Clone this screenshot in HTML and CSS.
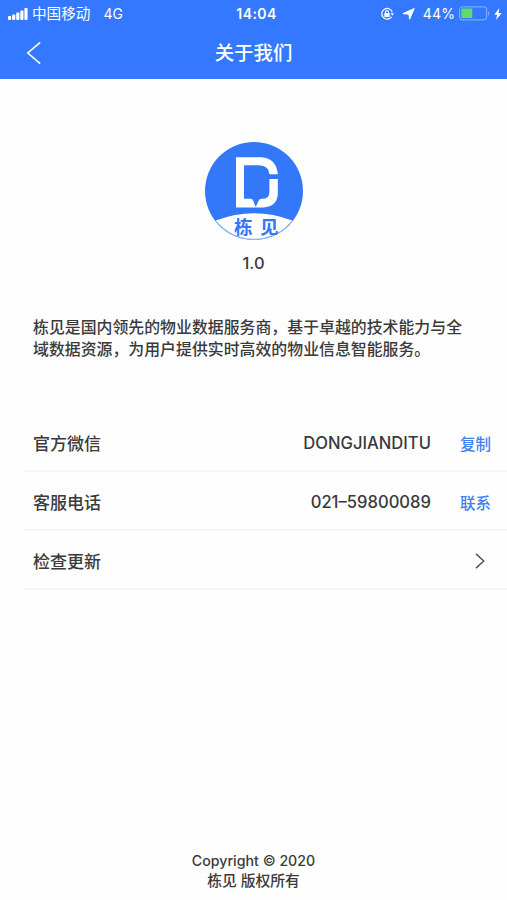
FILE: index.html
```html
<!DOCTYPE html>
<html lang="zh-CN">
<head>
    <meta charset="UTF-8">
    <meta name="viewport" content="width=device-width, initial-scale=1.0">
    <title>关于我们</title>
    <link rel="stylesheet" href="styles.css">
</head>
<body>
    <header class="header">
        <div class="status-bar">
            <div class="status-left">
                <svg class="signal" width="20" height="12" viewBox="0 0 20 12" fill="#fff">
                    <rect x="0" y="8" width="3.2" height="4" rx="1"/>
                    <rect x="4.1" y="6.5" width="3.2" height="5.5" rx="1"/>
                    <rect x="8.2" y="4.5" width="3.2" height="7.5" rx="1"/>
                    <rect x="12.3" y="2.5" width="3.2" height="9.5" rx="1"/>
                    <rect x="16.4" y="0" width="3.2" height="12" rx="1"/>
                </svg>
                <span class="carrier">中国移动</span>
                <span class="network">4G</span>
            </div>
            <span class="time">14:04</span>
            <div class="status-right">
                <svg class="lock" width="14" height="14" viewBox="0 0 14 14" fill="none" stroke="#fff">
                    <path d="M12.3 5A5.4 5.4 0 1 0 11.6 9.9" stroke-width="1.2"/>
                    <path d="M10.4 6.3H14l-1.7 2.5z" fill="#fff" stroke="none"/>
                    <rect x="4.3" y="6" width="5.4" height="4" rx=".5" fill="#fff" stroke="none"/>
                    <path d="M5.5 6.4V5.1a1.5 1.5 0 0 1 3 0v1.3" stroke-width="1.1"/>
                </svg>
                <svg class="location" width="13" height="12" viewBox="0 0 13 12" fill="#fff" stroke="#fff" stroke-width="1" stroke-linejoin="round">
                    <path d="M12.2.6L7.6 11.2 6.9 6.2.9 5.6z"/>
                </svg>
                <span class="percent">44%</span>
                <svg class="battery" width="31" height="15" viewBox="0 0 31 15">
                    <rect x=".6" y=".9" width="27" height="13" rx="2.6" fill="none" stroke="#8fb4ff" stroke-width="1"/>
                    <rect x="2.3" y="2.6" width="11" height="9.4" rx=".8" fill="#62dc68"/>
                    <path d="M29.2 5.2c1.6.7 1.6 3.8 0 4.5z" fill="#8fb4ff"/>
                </svg>
                <svg class="bolt" width="8" height="12" viewBox="0 0 8 12" fill="#fff">
                    <path d="M5.3 0L.3 6.7h2.9L2 12l5.7-7H4.6z"/>
                </svg>
            </div>
        </div>
        <div class="nav-bar">
            <svg class="back" width="16" height="24" viewBox="0 0 16 24" fill="none" stroke="#fff" stroke-width="1.6">
                <path d="M14.2 1.3L1.8 12l12.4 10.7"/>
            </svg>
            <h1>关于我们</h1>
        </div>
    </header>

    <main>
        <div class="brand">
            <svg class="logo" width="98" height="98" viewBox="0 0 98 98">
                <circle cx="49" cy="49" r="49" fill="#3478fa"/>
                <!-- white foot of the badge -->
                <path d="M10.8 78.6Q49 64 87.2 78.6A48.5 48.5 0 0 1 10.8 78.6z" fill="#fff"/>
                <path d="M10.8 78.6A48.5 48.5 0 0 0 87.2 78.6" fill="none" stroke="#a9c3ee" stroke-width="1"/>
                <!-- D mark with the map pin cut out -->
                <path d="M31 15.3h25.5Q71.5 16.5 72.8 32.3h-8.3Q64 23.5 54 23.2H39v33.6h6.6q2.1 0 2.7 2.3l2.4 6 2.8-6q.9-2.3 3-2.3h1.7q6.2 0 6.2-7V37h8.4v15.2q-1 12.3-14.3 13.3H31z" fill="#fff"/>
                <text class="logo-text" x="29" y="91.5">栋</text>
                <text class="logo-text" x="55" y="91.5">见</text>
            </svg>
            <p class="version">1.0</p>
        </div>

        <p class="intro">栋见是国内领先的物业数据服务商，基于卓越的技术能力与全域数据资源，为用户提供实时高效的物业信息智能服务。</p>

        <ul class="list">
            <li class="row">
                <span class="label">官方微信</span>
                <span class="value">DONGJIANDITU</span>
                <a class="action">复制</a>
            </li>
            <li class="row">
                <span class="label">客服电话</span>
                <span class="value">021–59800089</span>
                <a class="action">联系</a>
            </li>
            <li class="row">
                <span class="label">检查更新</span>
                <svg class="arrow" width="10" height="16" viewBox="0 0 10 16" fill="none" stroke="#555" stroke-width="1.5">
                    <path d="M1 .9L8.7 8 1 15.1"/>
                </svg>
            </li>
        </ul>
    </main>

    <footer class="footer">
        <p class="copyright">Copyright © 2020</p>
        <p class="owner">栋见 版权所有</p>
    </footer>
</body>
</html>
```
FILE: styles.css
```css
* {
    box-sizing: border-box;
    margin: 0;
    padding: 0;
}

body {
    display: flex;
    flex-direction: column;
    height: 900px;
    background: #fefefe;
    color: #3a3a3a;
    font-family: Inter, "Noto Sans CJK SC", sans-serif;
    font-weight: 500;
    overflow: hidden;
}

.header {
    height: 79px;
    background: #3478ff;
    color: #fff;
}

.status-bar {
    display: grid;
    grid-template-columns: 1fr auto 1fr;
    align-items: center;
    height: 27px;
    padding: 0 5px 0 8px;
    font-size: 14px;
    font-weight: 400;
    line-height: 26px;
}

.status-left,
.status-right {
    display: flex;
    align-items: center;
}

.status-right {
    justify-content: flex-end;
}

.carrier {
    margin-left: 4px;
    padding-top: 1px;
    font-size: 14.6px;
}

.network {
    margin-left: 13px;
}

.time {
    padding-left: 3px;
    font-weight: 600;
    letter-spacing: 0.4px;
}

.location {
    margin-left: 8px;
}

.percent {
    margin-left: 8px;
    letter-spacing: 0.1px;
}

.battery {
    margin-left: 4px;
}

.bolt {
    margin-left: 4px;
}

.nav-bar {
    display: grid;
    grid-template-columns: 1fr auto 1fr;
    align-items: center;
    height: 50px;
    padding: 0 26px;
}

.nav-bar h1 {
    padding-top: 1px;
    font-size: 19.4px;
    font-weight: 500;
    line-height: 50px;
}

.brand {
    display: flex;
    flex-direction: column;
    align-items: center;
    padding-top: 63px;
}

.logo-text {
    fill: #3478fa;
    font-family: "Noto Sans CJK SC", sans-serif;
    font-size: 18.5px;
    font-weight: 700;
}

.version {
    margin-top: 12px;
    font-size: 16.5px;
    line-height: 22px;
}

.intro {
    margin-top: 43px;
    padding: 0 33px;
    font-size: 15.9px;
    line-height: 22px;
}

.list {
    margin: 52px 0 0 24px;
    list-style: none;
}

.row {
    display: flex;
    align-items: center;
    height: 59px;
    padding: 2px 16px 0 9px;
    border-bottom: 2px solid #f5f5f5;
    font-size: 17px;
}

.value {
    margin-left: auto;
    padding-top: 1px;
    font-size: 16.6px;
    font-weight: 500;
}

.action {
    margin-left: 29px;
    color: #3f80ee;
    font-size: 15.5px;
}

.arrow {
    margin-left: auto;
    margin-right: 6px;
}

.footer {
    margin-top: auto;
    padding-bottom: 8px;
    font-size: 14.8px;
    line-height: 21px;
    text-align: center;
}

.copyright {
    margin-bottom: -1px;
    font-size: 14.2px;
    font-weight: 500;
}

.owner {
    padding-top: 1px;
}
```
